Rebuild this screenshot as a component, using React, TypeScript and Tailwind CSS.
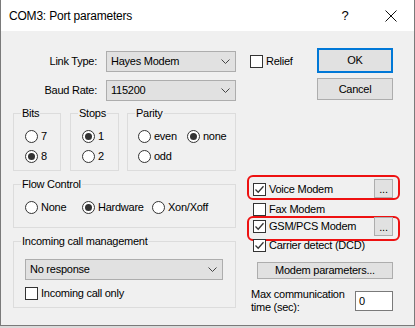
import React from "react";

// Win32-style "Port parameters" dialog

function CheckMark() {
  return (
    <svg width="11" height="11" viewBox="0 0 11 11" fill="none">
      <path d="M1.5 5.5 L4.2 8.2 L9.5 2.2" stroke="#333" strokeWidth="1.3" />
    </svg>
  );
}

function Checkbox({ checked, label, className = "" }: { checked?: boolean; label: string; className?: string }) {
  return (
    <div className={`flex items-center ${className}`}>
      <span className="flex h-[13px] w-[13px] shrink-0 items-center justify-center border border-[#333] bg-white">
        {checked && <CheckMark />}
      </span>
      <span className="ml-[3px] whitespace-nowrap leading-[13px]">{label}</span>
    </div>
  );
}

function Radio({ checked, label, className = "" }: { checked?: boolean; label: string; className?: string }) {
  return (
    <div className={`flex items-center ${className}`}>
      <span className="flex h-[13px] w-[13px] shrink-0 items-center justify-center rounded-full border border-[#333] bg-white">
        {checked && <span className="h-[7px] w-[7px] rounded-full bg-[#333]" />}
      </span>
      <span className="ml-[3px] whitespace-nowrap leading-[13px]">{label}</span>
    </div>
  );
}

function Combo({ value, className = "" }: { value: string; className?: string }) {
  return (
    <div className={`flex h-[21px] items-center border border-[#adadad] bg-[#e1e1e1] pl-[4px] pr-[5px] ${className}`}>
      <span className="flex-1 leading-[13px]">{value}</span>
      <svg width="9" height="5" viewBox="0 0 9 5" fill="none">
        <path d="M0.5 0.5 L4.5 4.5 L8.5 0.5" stroke="#444" strokeWidth="1" />
      </svg>
    </div>
  );
}

function GroupBox({
  label,
  className = "",
  bodyClass = "",
  children,
}: {
  label: string;
  className?: string;
  bodyClass?: string;
  children?: React.ReactNode;
}) {
  return (
    <div className={`flex flex-col border border-[#dcdcdc] ${className}`}>
      <span className="-mt-[7px] ml-[7px] self-start bg-[#f0f0f0] px-[1px] leading-[13px]">{label}</span>
      <div className={`flex flex-col ${bodyClass}`}>{children}</div>
    </div>
  );
}

function DotsButton({ className = "" }: { className?: string }) {
  return (
    <div className={`flex h-[19px] w-[19px] shrink-0 items-end justify-center border border-[#adadad] bg-[#e1e1e1] pb-[3px] leading-[10px] ${className}`}>
      ...
    </div>
  );
}

export default function App() {
  return (
    <div className="h-[328px] w-[415px] bg-[#dadada] font-['Liberation_Sans',Arial,sans-serif] text-[11px] tracking-[-0.25px] text-black">
      <div className="flex h-[326px] w-[415px] flex-col border-x border-b border-[#7a7a7a] bg-[#f0f0f0]">
        {/* title bar */}
        <div className="flex h-[31px] shrink-0 items-center bg-white">
          <span className="pl-[8px] pt-[1px] text-[12px] tracking-[-0.2px]">COM3: Port parameters</span>
          <div className="ml-auto flex h-full">
            <div className="flex w-[46px] items-center justify-center text-[13px]">?</div>
            <div className="flex w-[46px] items-center justify-center">
              <svg width="12" height="12" viewBox="0 0 12 12" fill="none">
                <path d="M0.5 0.5 L11.5 11.5 M11.5 0.5 L0.5 11.5" stroke="#111" strokeWidth="1" />
              </svg>
            </div>
          </div>
        </div>

        <div className="flex pl-[12px]">
          {/* left column */}
          <div className="flex w-[223px] flex-col">
            <div className="mt-[20px] flex items-center">
              <span className="w-[84px] text-right">Link Type:</span>
              <Combo value="Hayes Modem" className="ml-[9px] w-[130px]" />
            </div>
            <div className="mt-[8px] flex items-center">
              <span className="w-[84px] text-right">Baud Rate:</span>
              <Combo value="115200" className="ml-[9px] w-[130px]" />
            </div>

            <div className="mt-[12px] flex">
              <GroupBox label="Bits" className="h-[58px] w-[48px]" bodyClass="pl-[11px]">
                <Radio label="7" className="mt-[10px]" />
                <Radio label="8" checked className="mt-[7px]" />
              </GroupBox>
              <GroupBox label="Stops" className="ml-[9px] h-[58px] w-[49px]" bodyClass="pl-[11px]">
                <Radio label="1" checked className="mt-[10px]" />
                <Radio label="2" className="mt-[7px]" />
              </GroupBox>
              <GroupBox label="Parity" className="ml-[8px] h-[58px] w-[109px]" bodyClass="pl-[10px]">
                <div className="mt-[10px] flex">
                  <Radio label="even" className="w-[49px]" />
                  <Radio label="none" checked />
                </div>
                <Radio label="odd" className="mt-[7px]" />
              </GroupBox>
            </div>

            <GroupBox label="Flow Control" className="mt-[13px] h-[44px]" bodyClass="pl-[11px]">
              <div className="mt-[10px] flex">
                <Radio label="None" className="w-[57px]" />
                <Radio label="Hardware" checked className="w-[70px]" />
                <Radio label="Xon/Xoff" />
              </div>
            </GroupBox>

            <GroupBox label="Incoming call management" className="mt-[13px] h-[67px]" bodyClass="pl-[11px]">
              <Combo value="No response" className="mt-[11px] w-[198px]" />
              <Checkbox label="Incoming call only" className="mt-[7px]" />
            </GroupBox>
          </div>

          {/* right column */}
          <div className="ml-[11px] flex w-[153px] flex-col">
            <div className="mt-[17px] flex">
              <div className="w-[70px] pl-[3px] pt-[7px]">
                <Checkbox label="Relief" />
              </div>
              <div className="flex flex-col">
                <div className="flex h-[25px] w-[76px] items-center justify-center border-2 border-[#0078d7] bg-[#e1e1e1]">OK</div>
                <div className="mt-[5px] flex h-[22px] w-[76px] items-center justify-center border border-[#adadad] bg-[#e1e1e1]">Cancel</div>
              </div>
            </div>

            <div className="mt-[75px] flex h-[25px] items-start rounded-[6px] border-2 border-[#ee1111] pl-[4px] pr-[5px]">
              <Checkbox label="Voice Modem" checked className="mt-[6px]" />
              <DotsButton className="ml-auto mt-[2px]" />
            </div>
            <Checkbox label="Fax Modem" className="mt-[3px] pl-[6px]" />
            <div className="flex h-[25px] items-start rounded-[6px] border-2 border-[#ee1111] pl-[4px] pr-[5px]">
              <Checkbox label="GSM/PCS Modem" checked className="mt-[2px]" />
              <DotsButton className="-mt-[1px] ml-auto" />
            </div>
            <Checkbox label="Carrier detect (DCD)" checked className="-mt-[2px] pl-[6px]" />

            <div className="ml-[10px] mt-[10px] flex h-[17px] w-[136px] items-center justify-center border border-[#adadad] bg-[#e1e1e1]">
              Modem parameters...
            </div>

            <div className="mt-[9px] flex items-start">
              <div className="w-[108px] pl-[4px] leading-[13px]">
                Max communication
                <br />
                time (sec):
              </div>
              <div className="mt-[3px] flex h-[20px] w-[38px] items-center border border-[#7a7a7a] bg-white pl-[3px]">0</div>
            </div>
          </div>
        </div>
      </div>
    </div>
  );
}
